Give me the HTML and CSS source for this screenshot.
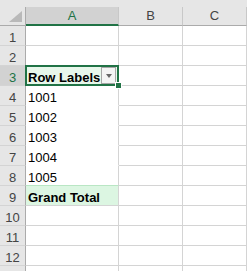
FILE: index.html
```html
<!DOCTYPE html>
<html lang="en">
<head>
    <meta charset="UTF-8">
    <title>Pivot</title>
    <link rel="stylesheet" href="styles.css">
</head>
<body>
    <div class="sheet">
        <div class="band"></div>
        <div class="grid">
            <div class="hd corner">
                <svg width="13" height="11" viewBox="0 0 13 11"><polygon points="13,0 13,11 0,11" fill="#b9b9b9"/></svg>
            </div>
            <div class="hd col sel">A</div>
            <div class="hd col">B</div>
            <div class="hd col">C</div>

            <div class="hd row">1</div><div class="c"></div><div class="c"></div><div class="c"></div>
            <div class="hd row">2</div><div class="c"></div><div class="c"></div><div class="c"></div>
            <div class="hd row sel">3</div>
            <div class="c pv label"><b>Row Labels</b><span class="drop"></span></div>
            <div class="c"></div><div class="c"></div>
            <div class="hd row">4</div><div class="c pv">1001</div><div class="c"></div><div class="c"></div>
            <div class="hd row">5</div><div class="c pv">1002</div><div class="c"></div><div class="c"></div>
            <div class="hd row">6</div><div class="c pv">1003</div><div class="c"></div><div class="c"></div>
            <div class="hd row">7</div><div class="c pv">1004</div><div class="c"></div><div class="c"></div>
            <div class="hd row">8</div><div class="c pv last">1005</div><div class="c"></div><div class="c"></div>
            <div class="hd row">9</div><div class="c total"><b>Grand Total</b></div><div class="c"></div><div class="c"></div>
            <div class="hd row">10</div><div class="c"></div><div class="c"></div><div class="c"></div>
            <div class="hd row">11</div><div class="c"></div><div class="c"></div><div class="c"></div>
            <div class="hd row">12</div><div class="c"></div><div class="c"></div><div class="c"></div>
            <div class="hd row"></div><div class="c"></div><div class="c"></div><div class="c"></div>
        </div>
        <div class="selbox"><span class="handle"></span></div>
    </div>
</body>
</html>
```

FILE: styles.css
```css
*{margin: 0;padding: 0;box-sizing: border-box;}
body{background: #fff;font-family: "Liberation Sans", Arial, sans-serif;font-size: 13px;color: #000;}
.sheet{position: relative;width: 247px;height: 271px;overflow: hidden;}
.band{height: 7px;background: #e6e6e6;}
.grid{display: grid;grid-template-columns: 26px 93px 64px 64px;grid-template-rows: 19px;grid-auto-rows: 20px;}

.hd{background: #e6e6e6;color: #444;text-align: center;line-height: 16px;}
.corner{display: flex;align-items: flex-end;justify-content: flex-end;padding: 0 3px 3px 0;border-right: 1px solid #ababab;border-bottom: 1px solid #ababab;}
.col{padding-top: 1px;border-right: 1px solid #c8c8c8;border-bottom: 1px solid #ababab;}
.col.sel{background: #d2d2d2;color: #217346;border-bottom: 2px solid #217346;}
.row{padding-top: 4px;border-right: 1px solid #ababab;border-bottom: 1px solid #d4d4d4;}
.row.sel{background: #d2d2d2;color: #217346;}

.c{padding: 4px 0 0 2px;line-height: 16px;border-right: 1px solid #d4d4d4;border-bottom: 1px solid #d4d4d4;white-space: nowrap;}
.pv{background: #fff;border-bottom-color: #fff;}
.pv.last{border-bottom-color: #b9e6c4;}
.label{display: flex;justify-content: space-between;align-items: flex-start;background: #e8f7eb;padding-top: 0;}
.label b{padding-top: 4px;}
.drop{width: 15px;height: 17px;margin: 1px 2px 0 0;background: #f4f4f4;border: 1px solid #a6a6a6;display: flex;align-items: center;justify-content: center;}
.drop::after{content: "";border-left: 3.5px solid transparent;border-right: 3.5px solid transparent;border-top: 4px solid #666;}
.total{background: #dcf6e2;}

.selbox{position: absolute;left: 25px;top: 65px;width: 94px;height: 21px;border: 2px solid #217346;}
.handle{position: absolute;right: -5px;bottom: -5px;width: 7px;height: 7px;background: #217346;border: 1px solid #fff;}
```
